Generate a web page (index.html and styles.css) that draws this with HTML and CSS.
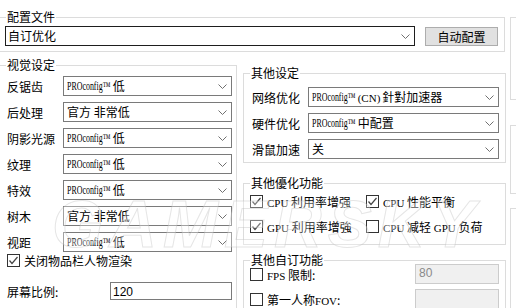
FILE: index.html
```html
<!DOCTYPE html>
<html lang="zh-CN">
<head>
<meta charset="utf-8">
<title>配置</title>
<link rel="stylesheet" href="styles.css">
</head>
<body>
<div class="page">
  <div class="main">
    <fieldset class="group top">
      <legend>配置文件</legend>
      <div class="body top-body">
        <div class="combo combo-wide focus"><span class="val">自订优化</span><svg class="chev" width="9" height="5" viewBox="0 0 9 5"><polyline points="0.5,0.5 4.5,4.5 8.5,0.5"/></svg></div>
        <button class="btn">自动配置</button>
      </div>
    </fieldset>

    <div class="cols">
      <fieldset class="group left">
        <legend>视觉设定</legend>
        <div class="body left-body">
          <div class="vrow"><span class="lbl">反锯齿</span><div class="combo"><span class="val"><span class="pro"><span>PROconfig™</span></span> 低</span><svg class="chev" width="9" height="5" viewBox="0 0 9 5"><polyline points="0.5,0.5 4.5,4.5 8.5,0.5"/></svg></div></div>
          <div class="vrow"><span class="lbl">后处理</span><div class="combo"><span class="val">官方 非常低</span><svg class="chev" width="9" height="5" viewBox="0 0 9 5"><polyline points="0.5,0.5 4.5,4.5 8.5,0.5"/></svg></div></div>
          <div class="vrow"><span class="lbl">阴影光源</span><div class="combo"><span class="val"><span class="pro"><span>PROconfig™</span></span> 低</span><svg class="chev" width="9" height="5" viewBox="0 0 9 5"><polyline points="0.5,0.5 4.5,4.5 8.5,0.5"/></svg></div></div>
          <div class="vrow"><span class="lbl">纹理</span><div class="combo"><span class="val"><span class="pro"><span>PROconfig™</span></span> 低</span><svg class="chev" width="9" height="5" viewBox="0 0 9 5"><polyline points="0.5,0.5 4.5,4.5 8.5,0.5"/></svg></div></div>
          <div class="vrow"><span class="lbl">特效</span><div class="combo"><span class="val"><span class="pro"><span>PROconfig™</span></span> 低</span><svg class="chev" width="9" height="5" viewBox="0 0 9 5"><polyline points="0.5,0.5 4.5,4.5 8.5,0.5"/></svg></div></div>
          <div class="vrow"><span class="lbl">树木</span><div class="combo"><span class="val">官方 非常低</span><svg class="chev" width="9" height="5" viewBox="0 0 9 5"><polyline points="0.5,0.5 4.5,4.5 8.5,0.5"/></svg></div></div>
          <div class="vrow"><span class="lbl">视距</span><div class="combo"><span class="val"><span class="pro"><span>PROconfig™</span></span> 低</span><svg class="chev" width="9" height="5" viewBox="0 0 9 5"><polyline points="0.5,0.5 4.5,4.5 8.5,0.5"/></svg></div></div>
          <label class="cbrow"><svg class="cb" width="13" height="13" viewBox="0 0 13 13"><rect x="0.5" y="0.5" width="12" height="12" class="box"/><polyline points="2.5,6.5 5,9.5 10.5,3" class="tick"/></svg><span>关闭物品栏人物渲染</span></label>
          <div class="scalerow"><span class="lbl">屏幕比例:</span><div class="input"><span class="num">120</span></div></div>
        </div>
      </fieldset>

      <div class="rightcol">
        <fieldset class="group other">
          <legend>其他设定</legend>
          <div class="body other-body">
            <div class="vrow"><span class="lbl">网络优化</span><div class="combo"><span class="val"><span class="pro"><span>PROconfig™</span></span> <span class="lat">(CN)</span>針對加速器</span><svg class="chev" width="9" height="5" viewBox="0 0 9 5"><polyline points="0.5,0.5 4.5,4.5 8.5,0.5"/></svg></div></div>
            <div class="vrow"><span class="lbl">硬件优化</span><div class="combo"><span class="val"><span class="pro"><span>PROconfig™</span></span> 中配置</span><svg class="chev" width="9" height="5" viewBox="0 0 9 5"><polyline points="0.5,0.5 4.5,4.5 8.5,0.5"/></svg></div></div>
            <div class="vrow"><span class="lbl">滑鼠加速</span><div class="combo"><span class="val">关</span><svg class="chev" width="9" height="5" viewBox="0 0 9 5"><polyline points="0.5,0.5 4.5,4.5 8.5,0.5"/></svg></div></div>
          </div>
        </fieldset>

        <fieldset class="group opt">
          <legend>其他優化功能</legend>
          <div class="body opt-body">
            <label class="cbrow"><svg class="cb" width="13" height="13" viewBox="0 0 13 13"><rect x="0.5" y="0.5" width="12" height="12" class="box"/><polyline points="2.5,6.5 5,9.5 10.5,3" class="tick"/></svg><span><span class="lat">CPU</span> 利用率增强</span></label>
            <label class="cbrow"><svg class="cb" width="13" height="13" viewBox="0 0 13 13"><rect x="0.5" y="0.5" width="12" height="12" class="box"/><polyline points="2.5,6.5 5,9.5 10.5,3" class="tick"/></svg><span><span class="lat">CPU</span> 性能平衡</span></label>
            <label class="cbrow"><svg class="cb" width="13" height="13" viewBox="0 0 13 13"><rect x="0.5" y="0.5" width="12" height="12" class="box"/><polyline points="2.5,6.5 5,9.5 10.5,3" class="tick"/></svg><span><span class="lat">GPU</span> 利用率增強</span></label>
            <label class="cbrow"><svg class="cb" width="13" height="13" viewBox="0 0 13 13"><rect x="0.5" y="0.5" width="12" height="12" class="box"/></svg><span><span class="lat">CPU</span> 减轻 <span class="lat">GPU</span> 负荷</span></label>
          </div>
        </fieldset>

        <fieldset class="group custom">
          <legend>其他自订功能</legend>
          <div class="body custom-body">
            <div class="crow"><label class="cbrow"><svg class="cb" width="13" height="13" viewBox="0 0 13 13"><rect x="0.5" y="0.5" width="12" height="12" class="box"/></svg><span><span class="lat">FPS</span> 限制:</span></label><div class="input dis"><span class="num">80</span></div></div>
            <div class="crow"><label class="cbrow"><svg class="cb" width="13" height="13" viewBox="0 0 13 13"><rect x="0.5" y="0.5" width="12" height="12" class="box"/></svg><span>第一人称<span class="lat">FOV</span>:</span></label><div class="input dis"></div></div>
          </div>
        </fieldset>
      </div>
    </div>
  </div>

  <div class="side">
    <div class="sbox s1"></div>
    <div class="sbox s2"></div>
    <div class="sbox s3"></div>
  </div>

  <div class="watermark" aria-hidden="true">GAMERSKY</div>
</div>
</body>
</html>
```

FILE: styles.css
```css
* { box-sizing: border-box; }

body {
  margin: 0;
  background: #fff;
  color: #000;
  font-family: "Noto Sans CJK SC", "Microsoft YaHei", sans-serif;
  font-size: 12px;
}

.page {
  position: relative;
  width: 516px;
  height: 308px;
  overflow: hidden;
  display: flex;
  align-items: flex-start;
}

.main {
  flex: none;
  width: 506px;
  margin-left: -1px;
  padding-top: 10px;
  display: flex;
  flex-direction: column;
}

.group {
  margin: 0;
  padding: 0;
  border: 1px solid #dcdcdc;
  min-width: 0;
}

.group > legend {
  margin-left: 6px;
  padding: 0 1px;
  height: 14px;
  line-height: 14px;
  font-size: 12px;
}

/* combobox */
.combo {
  display: flex;
  align-items: center;
  height: 20px;
  border: 1px solid #7a7a7a;
  background: #fff;
  padding-left: 3px;
  white-space: nowrap;
  line-height: 18px;
}
.combo.focus { border-color: #1e1e1e; padding-left: 2px; }
.combo .val { flex: 1; overflow: hidden; }
.chev {
  flex: none;
  margin-right: 4px;
  fill: none;
  stroke: #707070;
  stroke-width: 1;
}

.pro {
  display: inline-block;
  width: 43px;
  vertical-align: top;
  font-family: "Liberation Serif", serif;
  font-size: 12px;
}
.pro > span {
  display: inline-block;
  transform: scaleX(0.66);
  transform-origin: 0 50%;
}
.lat {
  font-family: "Liberation Serif", serif;
  font-size: 11px;
}
.other-body .lat { margin-right: 2px; }

/* top */
.top-body {
  display: flex;
  align-items: flex-start;
  padding: 2px 0 5px 5px;
}
.combo-wide { width: 410px; }
.btn {
  margin: 1px 0 0 10px;
  width: 73px;
  height: 19px;
  padding: 0;
  border: 1px solid #adadad;
  background: #e1e1e1;
  font-family: inherit;
  font-size: 12px;
  line-height: 16px;
  color: #000;
}

/* columns */
.cols {
  display: flex;
  align-items: flex-start;
  gap: 6px;
  margin-top: 6px;
}

.left { width: 238px; flex: none; height: 260px; }
.left-body {
  padding: 4px 4px 0 7px;
  display: flex;
  flex-direction: column;
}
.vrow {
  display: flex;
  align-items: center;
  height: 20px;
  margin-bottom: 6px;
}
.lbl { flex: none; width: 56px; white-space: nowrap; }
.left .combo { width: 169px; }

.cbrow {
  display: flex;
  align-items: center;
  gap: 4px;
  height: 14px;
  white-space: nowrap;
}
.left-body .cbrow { margin-top: -5px; }
.cb { flex: none; }
.cb .box { fill: #fff; stroke: #333; stroke-width: 1; }
.cb .tick { fill: none; stroke: #444; stroke-width: 1.2; }

.scalerow {
  display: flex;
  align-items: center;
  margin-top: 15px;
  height: 18px;
}
.scalerow .lbl { width: 103px; }
.input {
  width: 122px;
  height: 18px;
  border: 1px solid #7a7a7a;
  padding-left: 2px;
  line-height: 16px;
}
.num { font-family: "Liberation Sans", sans-serif; font-size: 12px; }

/* right column */
.rightcol {
  flex: none;
  width: 263px;
  margin-top: 8px;
  display: flex;
  flex-direction: column;
}
.other-body { padding: 7px 6px 3px 8px; }
.other-body .vrow:last-child { margin-bottom: 0; }
.other-body .combo { flex: 1; }

.opt { margin-top: 13px; }
.opt-body {
  display: grid;
  grid-template-columns: 116px auto;
  row-gap: 12px;
  padding: 5px 0 11px 6px;
}
.opt-body .cbrow { height: 13px; }

.custom { margin-top: 8px; height: 80px; }
.custom-body {
  margin-top: -3px;
  padding: 0 6px 0 6px;
  display: flex;
  flex-direction: column;
  gap: 5px;
}
.crow {
  display: flex;
  align-items: center;
  justify-content: space-between;
  height: 20px;
}
.input.dis {
  width: 84px;
  height: 20px;
  background: #f0f0f0;
  border-color: #cccccc;
  color: #8a8a8a;
  padding-left: 3px;
  line-height: 14px;
}

/* side panels partially visible */
.side {
  flex: none;
  width: 10px;
  margin-left: 5px;
  padding-top: 17px;
}
.sbox {
  border: 1px solid #dcdcdc;
  border-right: none;
}
.s1 { height: 83px; }
.s2 { height: 69px; margin-top: 25px; }
.s3 { height: 120px; margin-top: 14px; }

/* watermark */
.watermark {
  position: absolute;
  left: 52px;
  top: 186px;
  font-family: "Liberation Sans", sans-serif;
  font-weight: bold;
  font-style: italic;
  font-size: 66px;
  letter-spacing: 6px;
  color: rgba(255, 255, 255, 0.3);
  -webkit-text-stroke: 1px rgba(190, 190, 190, 0.4);
  pointer-events: none;
  white-space: nowrap;
}
```
